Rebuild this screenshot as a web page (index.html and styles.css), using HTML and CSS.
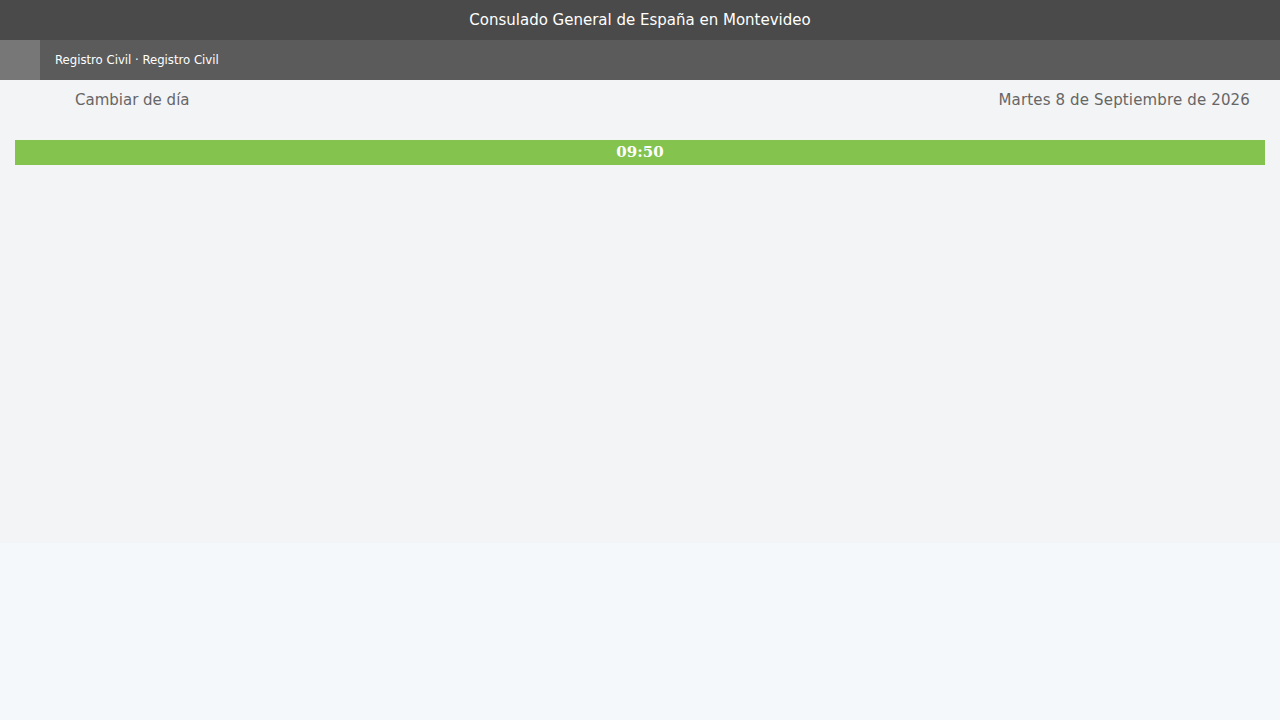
FILE: index.html
```html
<!DOCTYPE html>
<html lang="es">
<head>
  <meta charset="UTF-8">
  <title>Consulado General de España en Montevideo – Cita previa</title>
  <link rel="stylesheet" href="styles.css">
</head>
<body>
  <header class="top-bar">Consulado General de España en Montevideo</header>

  <div class="service-bar">
    <div class="service-back"></div>
    <div class="service-name">Registro Civil · Registro Civil</div>
  </div>

  <main class="agenda">
    <div class="day-nav">
      <a class="day-change">Cambiar de día</a>
      <span class="day-date">Martes 8 de Septiembre de 2026</span>
    </div>

    <div class="slots">
      <div class="slot">09:50</div>
    </div>
  </main>
</body>
</html>
```

FILE: styles.css
```css
body {
  margin: 0;
  background: #f4f8fb;
  font-family: "DejaVu Sans", sans-serif;
}
.top-bar {
  height: 40px;
  line-height: 40px;
  background: #4a4a4a;
  color: #fff;
  font-size: 15px;
  text-align: center;
}
.service-bar {
  display: flex;
  height: 40px;
  background: #5b5b5b;
}
.service-back {
  width: 40px;
  background: #777;
}
.service-name {
  padding-left: 15px;
  line-height: 40px;
  color: #fff;
  font-family: "DejaVu Sans Condensed", "DejaVu Sans", sans-serif;
  font-stretch: condensed;
  font-size: 13px;
}
.agenda {
  height: 463px;
  background: #f3f4f6;
}
.day-nav {
  display: flex;
  justify-content: space-between;
  padding: 10px 30px 0 75px;
  height: 40px;
  line-height: 20px;
  font-size: 15px;
  color: #666;
}
.day-date {
  letter-spacing: 0.15px;
}
.day-change {
  cursor: pointer;
}
.slots {
  margin-top: 10px;
  padding: 0 15px;
}
.slot {
  height: 25px;
  line-height: 25px;
  background: #84c34e;
  color: #fff;
  text-align: center;
  font-family: "DejaVu Serif", serif;
  font-weight: bold;
  font-size: 15px;
}
```
